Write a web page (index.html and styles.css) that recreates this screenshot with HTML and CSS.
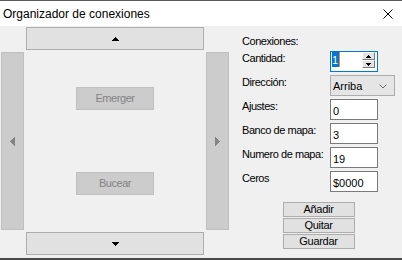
FILE: index.html
```html
<!DOCTYPE html>
<html lang="es">
<head>
    <meta charset="UTF-8">
    <meta name="viewport" content="width=device-width, initial-scale=1.0">
    <title>Organizador de conexiones</title>
    <link rel="stylesheet" href="styles.css">
</head>
<body>
    <div class="ventana">
        <div class="barra-titulo">
            <span class="titulo">Organizador de conexiones</span>
            <svg class="cerrar" width="10" height="10" viewBox="0 0 10 10">
                <path d="M0.5 0.5L9.5 9.5M9.5 0.5L0.5 9.5" stroke="#000" stroke-width="1" fill="none"/>
            </svg>
        </div>

        <div class="contenido">
            <!-- cruceta de navegacion -->
            <div class="cruceta">
                <div class="nav nav-arriba">
                    <svg width="7" height="4" shape-rendering="crispEdges"><path d="M3 0h1v1h1v1h1v1h1v1H0V3h1V2h1V1h1z" fill="#000"/></svg>
                </div>
                <div class="nav lateral nav-izq">
                    <svg width="5" height="9" shape-rendering="crispEdges"><path d="M0 4h1V3h1V2h1V1h1V0h1v9H4V8H3V7H2V6H1V5H0z" fill="#838383"/></svg>
                </div>
                <div class="centro">
                    <div class="boton-off">Emerger</div>
                    <div class="boton-off">Bucear</div>
                </div>
                <div class="nav lateral nav-der">
                    <svg width="5" height="9" shape-rendering="crispEdges"><path d="M0 0h1v1h1v1h1v1h1v1h1v1H4v1H3v1H2v1H1v1H0z" fill="#838383"/></svg>
                </div>
                <div class="nav nav-abajo">
                    <svg width="7" height="4" shape-rendering="crispEdges"><path d="M0 0h7v1H6v1H5v1H4v1H3V3H2V2H1V1H0z" fill="#000"/></svg>
                </div>
            </div>

            <!-- panel de datos -->
            <div class="panel">
                <div class="etiqueta cabecera">Conexiones:</div>

                <div class="campo">
                    <span class="etiqueta">Cantidad:</span>
                    <div class="spin">
                        <span class="seleccion">1</span><span class="cursor"></span>
                        <div class="spin-botones">
                            <div class="spin-b">
                                <svg width="5" height="3" shape-rendering="crispEdges"><path d="M2 0h1v1h1v1h1v1H0V2h1V1h1z" fill="#000"/></svg>
                            </div>
                            <div class="spin-b">
                                <svg width="5" height="3" shape-rendering="crispEdges"><path d="M0 0h5v1H4v1H3v1H2V2H1V1H0z" fill="#000"/></svg>
                            </div>
                        </div>
                    </div>
                </div>

                <div class="campo">
                    <span class="etiqueta">Dirección:</span>
                    <div class="combo">
                        <span>Arriba</span>
                        <svg width="8" height="5" viewBox="0 0 8 5"><path d="M0.5 0.5L4 4L7.5 0.5" stroke="#6d6d6d" stroke-width="1" fill="none"/></svg>
                    </div>
                </div>

                <div class="campo">
                    <span class="etiqueta">Ajustes:</span>
                    <div class="caja">0</div>
                </div>

                <div class="campo">
                    <span class="etiqueta">Banco de mapa:</span>
                    <div class="caja">3</div>
                </div>

                <div class="campo">
                    <span class="etiqueta">Numero de mapa:</span>
                    <div class="caja">19</div>
                </div>

                <div class="campo">
                    <span class="etiqueta">Ceros</span>
                    <div class="caja">$0000</div>
                </div>

                <div class="acciones">
                    <div class="boton">Añadir</div>
                    <div class="boton">Quitar</div>
                    <div class="boton">Guardar</div>
                </div>
            </div>
        </div>
    </div>
</body>
</html>
```

FILE: styles.css
```css
* {
    box-sizing: border-box;
}
body {
    margin: 0;
    background: #f0f0f0;
    font-family: "Liberation Sans", Arial, sans-serif;
    font-size: 11px;
    color: #000;
}
.ventana {
    width: 402px;
    height: 260px;
    display: flex;
    flex-direction: column;
    background: #f0f0f0;
    border-top: 1px solid #5a5a5a;
    border-bottom: 2px solid #474747;
}
.barra-titulo {
    height: 25px;
    flex: none;
    background: #fff;
    display: flex;
    align-items: center;
    justify-content: space-between;
    padding: 0 9px 0 3px;
}
.titulo {
    font-family: "Liberation Sans", Arial, sans-serif;
    font-size: 12px;
    padding-top: 1px;
}
.cerrar {
    display: block;
}
.contenido {
    flex: 1;
    display: flex;
}

/* cruceta */
.cruceta {
    display: grid;
    grid-template-columns: 23px 178px 23px;
    grid-template-rows: 23px 178px 23px;
    grid-template-areas:
        ". arriba ."
        "izq centro der"
        ". abajo .";
    gap: 2px;
    margin: 1px 0 0 1px;
}
.nav {
    display: flex;
    align-items: center;
    justify-content: center;
    background: #e1e1e1;
    border: 1px solid #adadad;
}
.nav svg {
    display: block;
}
.lateral {
    background: #cccccc;
    border-color: #bfbfbf;
}
.nav-arriba { grid-area: arriba; }
.nav-abajo { grid-area: abajo; }
.nav-izq { grid-area: izq; }
.nav-der { grid-area: der; }
.centro {
    grid-area: centro;
    display: flex;
    flex-direction: column;
    align-items: center;
    justify-content: space-between;
    padding: 35px 0;
}
.boton-off {
    width: 78px;
    height: 23px;
    background: #cccccc;
    border: 1px solid #bfbfbf;
    color: #838383;
    text-align: center;
    line-height: 21px;
    letter-spacing: -0.45px;
}

/* panel */
.panel {
    width: 153px;
    margin-left: 13px;
    padding-top: 9px;
    display: flex;
    flex-direction: column;
}
.etiqueta {
    line-height: 13px;
    letter-spacing: -0.45px;
}
.cabecera {
    margin-bottom: 3px;
}
.campo {
    display: flex;
    height: 21px;
    margin-bottom: 3px;
}
.campo .etiqueta {
    width: 88px;
    flex: none;
    padding-top: 1px;
}
.caja {
    width: 48px;
    height: 21px;
    background: #fff;
    border: 1px solid #7a7a7a;
    padding: 2px 2px 0;
    line-height: 18px;
}
.spin {
    width: 48px;
    height: 21px;
    background: #fff;
    border: 1px solid #0078d7;
    display: flex;
    align-items: flex-start;
    padding: 0 2px 0 1px;
}
.seleccion {
    background: #0078d7;
    color: #fff;
    height: 15px;
    line-height: 17px;
    padding: 0 1px 0 0;
}
.cursor {
    width: 1px;
    height: 15px;
    background: #f08a24;
}
.spin-botones {
    margin-left: auto;
    width: 13px;
    height: 16px;
    display: flex;
    flex-direction: column;
}
.spin-b {
    height: 8px;
    display: flex;
    align-items: center;
    justify-content: center;
    background: #e3e3e3;
    border-top: 1px solid #fff;
    border-left: 1px solid #fff;
    border-right: 1px solid #7a7a7a;
    border-bottom: 1px solid #7a7a7a;
}
.spin-b svg {
    display: block;
}
.combo {
    width: 65px;
    height: 21px;
    background: #e5e5e5;
    border: 1px solid #adadad;
    display: flex;
    align-items: center;
    justify-content: space-between;
    padding: 1px 7px 0 2px;
}
.combo svg {
    display: block;
}
.acciones {
    margin-top: 7px;
    display: flex;
    flex-direction: column;
    align-items: center;
    gap: 1px;
}
.boton {
    width: 72px;
    height: 15px;
    background: #e1e1e1;
    border: 1px solid #adadad;
    text-align: center;
    line-height: 13px;
    letter-spacing: -0.3px;
}
```
